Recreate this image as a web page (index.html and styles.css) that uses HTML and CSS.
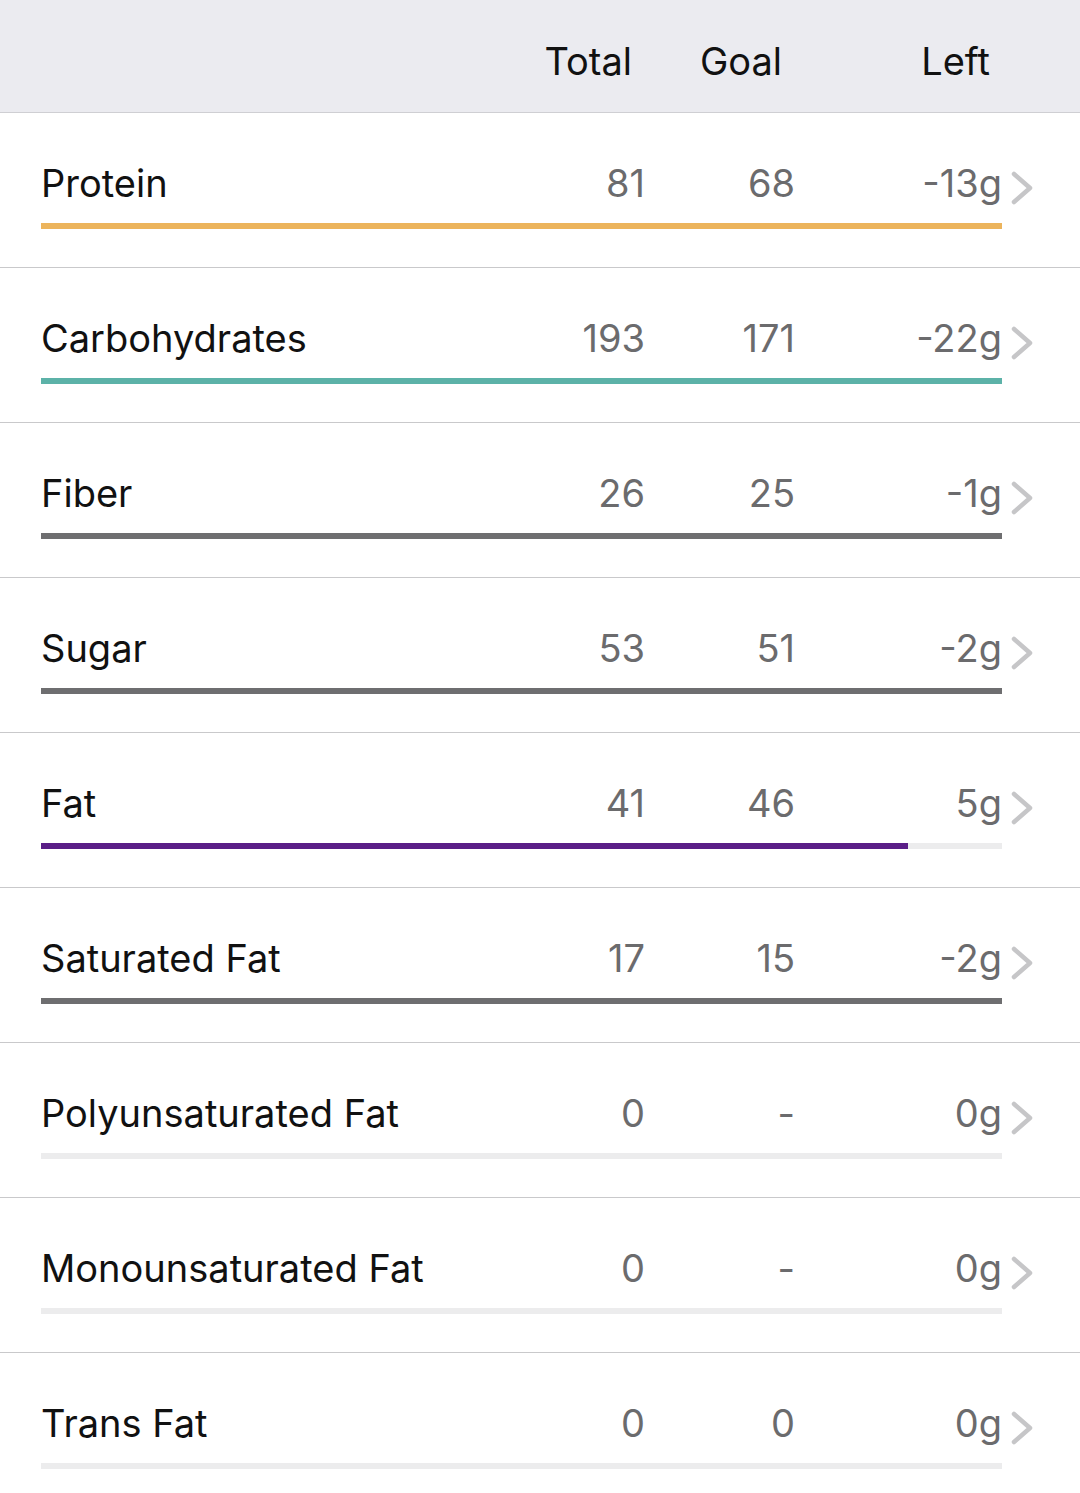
FILE: index.html
```html
<!DOCTYPE html>
<html>
<head>
<meta charset="utf-8">
<link rel="stylesheet" href="styles.css">
</head>
<body>
<div class="header">
  <span class="hcell htotal">Total</span>
  <span class="hcell hgoal">Goal</span>
  <span class="hcell hleft">Left</span>
</div>
<div class="list">
  <div class="row">
    <div class="line"><span class="label">Protein</span><span class="num total">81</span><span class="num goal">68</span><span class="num left">-13g</span><svg class="chev" viewBox="0 0 24 34"><path d="M4 3 L20 17 L4 31"/></svg></div>
    <div class="track"><div class="fill protein" style="width:100%"></div></div>
  </div>
  <div class="row">
    <div class="line"><span class="label">Carbohydrates</span><span class="num total">193</span><span class="num goal">171</span><span class="num left">-22g</span><svg class="chev" viewBox="0 0 24 34"><path d="M4 3 L20 17 L4 31"/></svg></div>
    <div class="track"><div class="fill carbs" style="width:100%"></div></div>
  </div>
  <div class="row">
    <div class="line"><span class="label">Fiber</span><span class="num total">26</span><span class="num goal">25</span><span class="num left">-1g</span><svg class="chev" viewBox="0 0 24 34"><path d="M4 3 L20 17 L4 31"/></svg></div>
    <div class="track"><div class="fill gray" style="width:100%"></div></div>
  </div>
  <div class="row">
    <div class="line"><span class="label">Sugar</span><span class="num total">53</span><span class="num goal">51</span><span class="num left">-2g</span><svg class="chev" viewBox="0 0 24 34"><path d="M4 3 L20 17 L4 31"/></svg></div>
    <div class="track"><div class="fill gray" style="width:100%"></div></div>
  </div>
  <div class="row">
    <div class="line"><span class="label">Fat</span><span class="num total">41</span><span class="num goal">46</span><span class="num left">5g</span><svg class="chev" viewBox="0 0 24 34"><path d="M4 3 L20 17 L4 31"/></svg></div>
    <div class="track"><div class="fill fat" style="width:90.2%"></div></div>
  </div>
  <div class="row">
    <div class="line"><span class="label">Saturated Fat</span><span class="num total">17</span><span class="num goal">15</span><span class="num left">-2g</span><svg class="chev" viewBox="0 0 24 34"><path d="M4 3 L20 17 L4 31"/></svg></div>
    <div class="track"><div class="fill gray" style="width:100%"></div></div>
  </div>
  <div class="row">
    <div class="line"><span class="label">Polyunsaturated Fat</span><span class="num total">0</span><span class="num goal">-</span><span class="num left">0g</span><svg class="chev" viewBox="0 0 24 34"><path d="M4 3 L20 17 L4 31"/></svg></div>
    <div class="track"></div>
  </div>
  <div class="row">
    <div class="line"><span class="label">Monounsaturated Fat</span><span class="num total">0</span><span class="num goal">-</span><span class="num left">0g</span><svg class="chev" viewBox="0 0 24 34"><path d="M4 3 L20 17 L4 31"/></svg></div>
    <div class="track"></div>
  </div>
  <div class="row">
    <div class="line"><span class="label">Trans Fat</span><span class="num total">0</span><span class="num goal">0</span><span class="num left">0g</span><svg class="chev" viewBox="0 0 24 34"><path d="M4 3 L20 17 L4 31"/></svg></div>
    <div class="track"></div>
  </div>
</div>
</body>
</html>
```

FILE: styles.css
```css
* { box-sizing: border-box; }
html, body { margin: 0; padding: 0; }
body {
  width: 1080px;
  height: 1493px;
  overflow: hidden;
  background: #ffffff;
  font-family: Inter, "Noto Sans", sans-serif;
  font-size: 38px;
  line-height: 44px;
  -webkit-font-smoothing: antialiased;
}
.header {
  height: 113px;
  background: #ebebf0;
  border-bottom: 1px solid #cfcfd3;
  display: flex;
  justify-content: flex-end;
  padding: 39px 90px 0 0;
  color: #111111;
}
.hcell { text-align: right; }
.htotal { width: 120px; }
.hgoal { width: 150px; }
.hleft { width: 208px; }

.row {
  height: 155px;
  border-bottom: 1px solid #c9c9cb;
  padding: 48px 78px 0 41px;
}
.line {
  display: flex;
  align-items: flex-start;
}
.label {
  flex: 1;
  color: #111111;
}
.num {
  text-align: right;
  color: #6b6b6d;
}
.total { width: 150px; }
.goal { width: 150px; }
.left { width: 207px; }
.chev {
  width: 24px;
  height: 34px;
  margin: 10px -32px 0 8px;
  flex: none;
  fill: none;
  stroke: #c6c6c8;
  stroke-width: 4.5;
  stroke-linecap: round;
  stroke-linejoin: round;
}
.track {
  margin-top: 18px;
  height: 6px;
  background: #ececed;
}
.fill { height: 6px; }
.protein { background: #ecb45c; }
.carbs { background: #5cb2a8; }
.gray { background: #6e6e70; }
.fat { background: #5a1e87; }
```
